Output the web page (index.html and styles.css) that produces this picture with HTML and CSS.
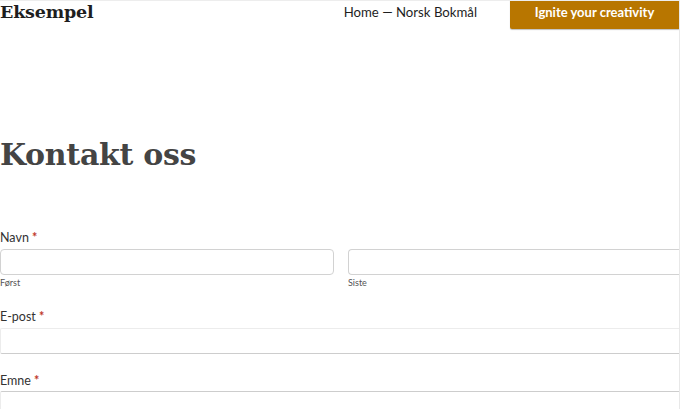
FILE: index.html
```html
<!DOCTYPE html>
<html lang="nb">
<head>
<meta charset="utf-8">
<title>Kontakt oss</title>
<link rel="stylesheet" href="styles.css">
</head>
<body>
<div class="page">
  <header class="header">
    <div class="logo">Eksempel</div>
    <nav class="nav">Home — Norsk Bokmål</nav>
    <a class="cta">Ignite your creativity</a>
  </header>
  <main class="main">
    <h1 class="title">Kontakt oss</h1>
    <form class="form">
      <div class="field">
        <div class="label">Navn <span class="req">*</span></div>
        <div class="name-row">
          <div class="name-col">
            <div class="input rounded"></div>
            <div class="sub">Først</div>
          </div>
          <div class="name-col">
            <div class="input rounded open-right"></div>
            <div class="sub">Siste</div>
          </div>
        </div>
      </div>
      <div class="field field-tight">
        <div class="label">E-post <span class="req">*</span></div>
        <div class="input flat"></div>
      </div>
      <div class="field">
        <div class="label label-tight">Emne <span class="req">*</span></div>
        <div class="input flat dark-top"></div>
      </div>
    </form>
  </main>
</div>
</body>
</html>
```

FILE: styles.css
```css
html, body {
  margin: 0;
  padding: 0;
  background: #fff;
}
.page {
  width: 680px;
  height: 409px;
  box-sizing: border-box;
  border-top: 1px solid #ededed;
  border-right: 1px solid #e8e8e8;
  overflow: hidden;
  font-family: "Lato", "Open Sans", sans-serif;
}
.header {
  display: flex;
  align-items: flex-start;
  height: 29px;
}
.logo {
  font-family: "DejaVu Serif", serif;
  font-weight: bold;
  font-size: 17.5px;
  line-height: 22px;
  color: #1e1e1e;
  letter-spacing: -0.2px;
}
.nav {
  margin-left: auto;
  margin-right: 33px;
  font-size: 13.2px;
  line-height: 22px;
  color: #1e1e1e;
}
.cta {
  width: 169px;
  height: 29px;
  margin-top: -1px;
  background: #b87600;
  color: #fff;
  font-weight: bold;
  font-size: 13px;
  line-height: 24px;
  text-align: center;
  box-shadow: 0 1px 1px rgba(0,0,0,0.25);
  border-radius: 0 0 0 2px;
}
.main {
  padding-top: 105px;
}
.title {
  margin: 0;
  font-family: "DejaVu Serif", serif;
  font-weight: bold;
  font-size: 30px;
  line-height: 40px;
  color: #444;
  letter-spacing: -0.3px;
}
.form {
  margin-top: 55px;
}
.label {
  font-size: 12.5px;
  line-height: 16px;
  color: #333;
  margin-bottom: 3px;
}
.label-tight {
  margin-bottom: 2px;
}
.req {
  color: #c0392b;
  font-weight: bold;
}
.name-row {
  display: flex;
  gap: 14px;
  margin-right: -3px;
}
.name-col {
  flex: 1;
}
.input {
  height: 26px;
  box-sizing: border-box;
  background: #fff;
}
.rounded {
  border: 1px solid #d2d2d2;
  border-radius: 4px;
}
.open-right {
  border-right: none;
  border-radius: 4px 0 0 4px;
}
.sub {
  font-size: 9px;
  line-height: 12px;
  color: #555;
  margin-top: 2px;
}
.field {
  margin-bottom: 20px;
}
.field-tight {
  margin-bottom: 19px;
}
.field:last-child {
  margin-bottom: 0;
}
.flat {
  border-top: 1px solid #ececec;
  border-left: 1px solid #ececec;
  border-bottom: 1px solid #cdcdcd;
  border-radius: 2px 0 0 2px;
}
.dark-top {
  border-top: 1px solid #cdcdcd;
  border-bottom: 1px solid #ececec;
  height: 30px;
}
```
